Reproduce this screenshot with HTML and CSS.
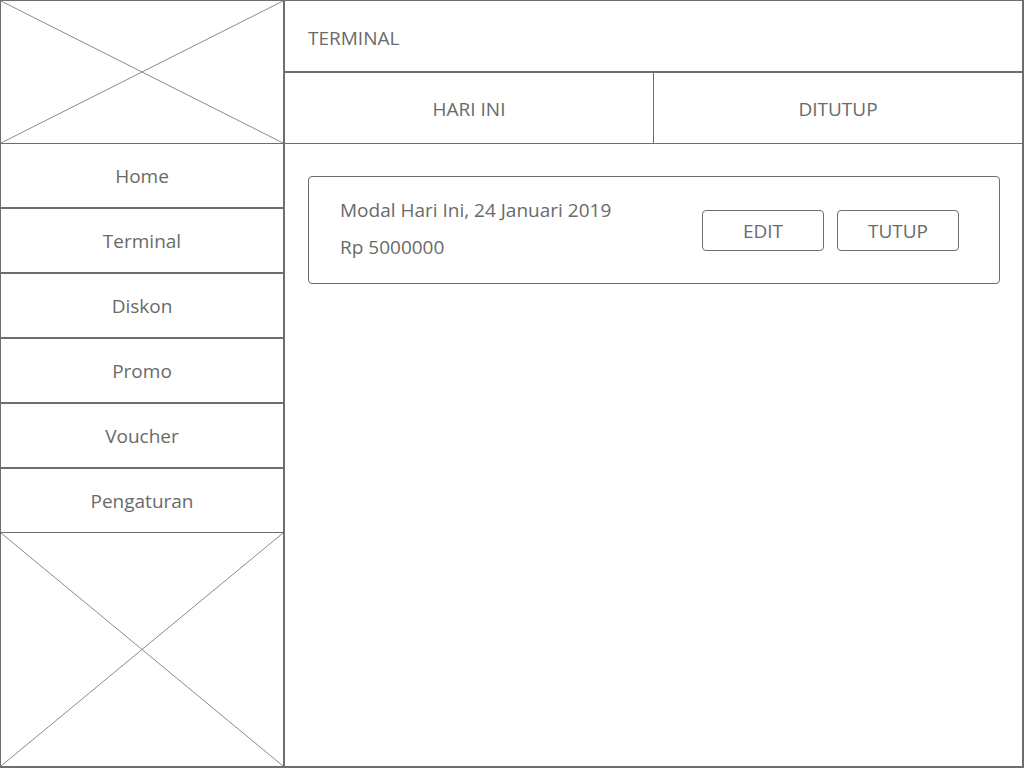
FILE: index.html
```html
<!DOCTYPE html>
<html lang="id">
<head>
<meta charset="utf-8">
<title>Terminal</title>
<link rel="stylesheet" href="styles.css">
</head>
<body>
<div class="frame">
  <aside class="sidebar">
    <div class="logo placeholder">
      <svg class="cross" viewBox="0 0 100 100" preserveAspectRatio="none"><line x1="0" y1="0" x2="100" y2="100" vector-effect="non-scaling-stroke"/><line x1="100" y1="0" x2="0" y2="100" vector-effect="non-scaling-stroke"/></svg>
    </div>
    <nav class="nav">
      <a class="nav-item">Home</a>
      <a class="nav-item">Terminal</a>
      <a class="nav-item">Diskon</a>
      <a class="nav-item">Promo</a>
      <a class="nav-item">Voucher</a>
      <a class="nav-item">Pengaturan</a>
    </nav>
    <div class="banner placeholder">
      <svg class="cross" viewBox="0 0 100 100" preserveAspectRatio="none"><line x1="0" y1="0" x2="100" y2="100" vector-effect="non-scaling-stroke"/><line x1="100" y1="0" x2="0" y2="100" vector-effect="non-scaling-stroke"/></svg>
    </div>
  </aside>
  <main class="main">
    <header class="header">TERMINAL</header>
    <div class="tabs">
      <div class="tab">HARI INI</div>
      <div class="tab">DITUTUP</div>
    </div>
    <section class="content">
      <div class="card">
        <div class="card-info">
          <div class="card-line">Modal Hari Ini, 24 Januari 2019</div>
          <div class="card-line">Rp 5000000</div>
        </div>
        <div class="card-actions">
          <button class="btn">EDIT</button>
          <button class="btn">TUTUP</button>
        </div>
      </div>
    </section>
  </main>
</div>
</body>
</html>
```

FILE: styles.css
```css
html, body {
  margin: 0;
  padding: 0;
  background: #ffffff;
}

body {
  font-family: "Open Sans", "Noto Sans", "Liberation Sans", sans-serif;
  font-size: 19px;
  color: #6a6a6a;
}

.frame {
  box-sizing: border-box;
  width: 1024px;
  height: 768px;
  display: grid;
  grid-template-columns: 284px 1fr;
  border-top: 1px solid #6e6e6e;
  border-left: 1px solid #6e6e6e;
  border-right: 2px solid #6e6e6e;
  border-bottom: 2px solid #6e6e6e;
}

.sidebar {
  display: flex;
  flex-direction: column;
  border-right: 2px solid #6e6e6e;
  min-height: 0;
}

.placeholder {
  position: relative;
}

.cross {
  position: absolute;
  inset: 0;
  width: 100%;
  height: 100%;
}

.cross line {
  stroke: #8a8a8a;
  stroke-width: 1;
}

.logo {
  height: 142px;
  border-bottom: 1px solid #6e6e6e;
  flex: none;
}

.nav {
  display: flex;
  flex-direction: column;
}

.nav-item {
  box-sizing: border-box;
  height: 65px;
  display: flex;
  align-items: center;
  justify-content: center;
  border-bottom: 2px solid #6e6e6e;
  padding-top: 1px;
}

.nav-item:last-child {
  border-bottom-width: 1px;
  height: 64px;
}

.banner {
  flex: 1;
}

.main {
  display: flex;
  flex-direction: column;
  min-width: 0;
  border-top: 1px solid #6e6e6e;
  margin-top: -1px;
}

.header {
  box-sizing: border-box;
  height: 72px;
  border-bottom: 2px solid #6e6e6e;
  display: flex;
  align-items: center;
  padding-left: 23px;
  padding-top: 3px;
}

.tabs {
  box-sizing: border-box;
  height: 71px;
  display: flex;
  border-bottom: 1px solid #6e6e6e;
}

.tab {
  flex: 1;
  display: flex;
  align-items: center;
  justify-content: center;
  padding-top: 1px;
}

.tab + .tab {
  border-left: 1px solid #6e6e6e;
}

.content {
  padding: 32px 22px 0 23px;
}

.card {
  box-sizing: border-box;
  height: 108px;
  border: 1px solid #6e6e6e;
  border-radius: 4px;
  display: flex;
  align-items: center;
  justify-content: space-between;
  padding: 0 40px 0 31px;
}

.card-info {
  display: flex;
  flex-direction: column;
  gap: 10px;
  line-height: 27px;
  padding-bottom: 3px;
}

.card-actions {
  display: flex;
  gap: 13px;
}

.btn {
  box-sizing: border-box;
  width: 122px;
  height: 41px;
  border: 1px solid #6e6e6e;
  border-radius: 4px;
  background: #ffffff;
  font-family: inherit;
  font-size: 19px;
  color: #6a6a6a;
  padding: 2px 0 0;
}
```
